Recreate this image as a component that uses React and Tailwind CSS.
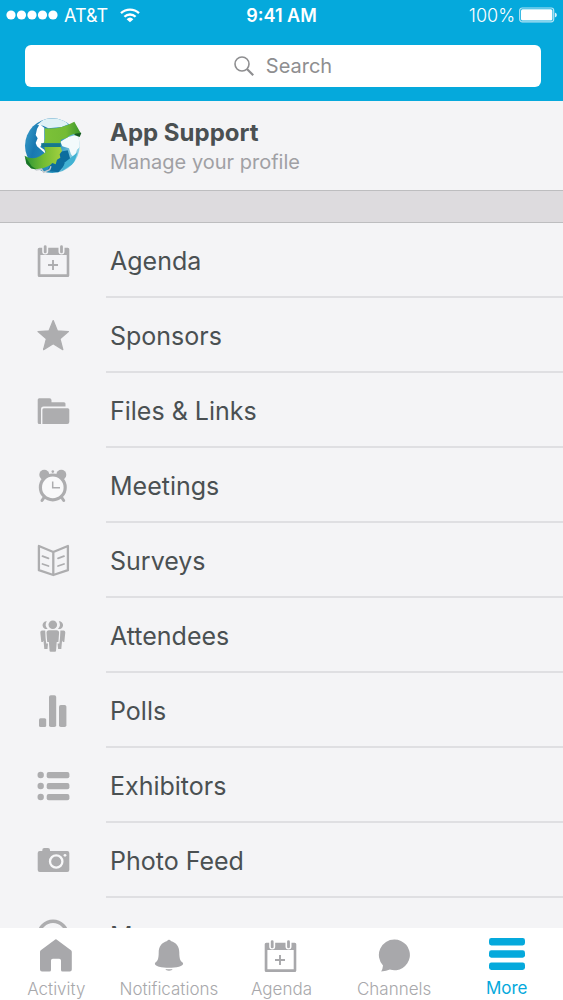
import React from "react";

const Icon = ({ children, className = "" }) => (
  <svg viewBox="0 0 36 36" aria-hidden="true" className={`size-9 shrink-0 ${className}`} fill="currentColor">
    {children}
  </svg>
);

const CalendarIcon = () => (
  <Icon>
    <path
      fillRule="evenodd"
      d="M3.2 4.8H6.2V8.5a3 3 0 0 0 6 0V4.8H22.5V8.5a3 3 0 0 0 6 0V4.8H31.8a1.5 1.5 0 0 1 1.5 1.5V32.5a1.5 1.5 0 0 1-1.5 1.500H3.200a1.500 1.500 0 0 1-1.500-1.500V6.300a1.500 1.500 0 0 1 1.500-1.500ZM4.400 12V31.300H30.700V12Z"
    />
    <rect x="7.800" y="2.300" width="2.800" height="8" rx="1.400" />
    <rect x="24.100" y="2.300" width="2.800" height="8" rx="1.400" />
    <path d="M17 17v10M12 22h10" fill="none" stroke="currentColor" strokeWidth="1.900" />
  </Icon>
);

const StarIcon = () => (
  <Icon>
    <path
      d="M17.200 2.600 21.300 12.800 32.400 13.600 24 20.800 26.800 31.600 17.200 25.800 7.600 31.600 10.400 20.800 2 13.600 13.100 12.800Z"
      stroke="currentColor"
      strokeWidth="1.300"
      strokeLinejoin="round"
    />
  </Icon>
);

const FolderIcon = () => (
  <Icon>
    <path d="M3.200 5.300H13.500a2 2 0 0 1 2 2V9.300H28a1.500 1.500 0 0 1 1.500 1.500V13.600H7.500a2.500 2.500 0 0 0-2.500 2.500V31H3.200a1.500 1.500 0 0 1-1.500-1.500V6.800a1.500 1.500 0 0 1 1.500-1.500Z" />
    <path d="M8 15.300H31.800a1.500 1.500 0 0 1 1.500 1.500V29a2 2 0 0 1-2 2H6.400V16.800a1.500 1.500 0 0 1 1.600-1.500Z" />
  </Icon>
);

const ClockIcon = () => (
  <Icon>
    <circle cx="8.300" cy="6.800" r="5" />
    <circle cx="25.300" cy="6.800" r="5" />
    <path d="M8 29.500 6 32.500M25.700 29.500l2 3" stroke="currentColor" strokeWidth="3" strokeLinecap="round" />
    <circle cx="16.800" cy="19.400" r="12.400" fill="#f9f9fa" stroke="currentColor" strokeWidth="3.200" />
    <circle cx="16.800" cy="3.600" r="1.300" />
    <path d="M16.700 13.500V19.700H24" fill="none" stroke="currentColor" strokeWidth="1.500" />
  </Icon>
);

const BookIcon = () => (
  <Icon>
    <g fill="none" stroke="currentColor" strokeLinejoin="round">
      <path d="M2.900 3 17.300 9 31.900 3V27.200L17.300 32 2.900 27.200ZM17.300 9V32" strokeWidth="2.300" />
      <path
        d="M6.500 13.200 12.500 15.300M6.500 21 12.500 23M22 15.300 28 13.200M22 23 28 21"
        strokeWidth="1.800"
        strokeLinecap="round"
      />
    </g>
  </Icon>
);

const PeopleIcon = () => (
  <Icon>
    <path d="M10.800 3.300a3.900 3.900 0 1 0 .8 7.600 6 6 0 0 1-.8-7.600ZM22.800 3.300a3.900 3.900 0 1 1-.8 7.600 6 6 0 0 0 .8-7.600Z" />
    <circle cx="16.800" cy="6.700" r="4.300" />
    <path d="M13 12.200H20.600a2.500 2.500 0 0 1 2.500 2.500L22.400 24H20.700L20 33a1 1 0 0 1-1 .8H14.600a1 1 0 0 1-1-.8L12.900 24H11.200L10.500 14.700a2.500 2.500 0 0 1 2.500-2.500Z" />
    <path d="M6.600 12.500H9.200L9.600 20 10.200 25.500H12L11.500 31H8.300L7.500 22.500 6.800 24H5.300L4.300 14.500a2 2 0 0 1 2.300-2ZM27 12.500H24.400L24 20 23.400 25.500H21.600L22.100 31H25.300L26.100 22.500 26.900 24H28.300L29.300 14.500a2 2 0 0 0-2.300-2Z" />
  </Icon>
);

const BarsIcon = () => (
  <Icon>
    <rect x="3" y="25.300" width="7.200" height="8.700" rx="1.500" />
    <rect x="13" y="2.300" width="7.200" height="31.700" rx="1.800" />
    <rect x="23" y="12" width="7.400" height="22" rx="1.800" />
  </Icon>
);

const ListIcon = () => (
  <Icon>
    <circle cx="4.700" cy="7" r="3.200" />
    <circle cx="4.700" cy="18" r="3.200" />
    <circle cx="4.700" cy="29" r="3.200" />
    <rect x="10.700" y="3.900" width="22.700" height="6.300" rx="2" />
    <rect x="10.700" y="14.900" width="22.700" height="6.300" rx="2" />
    <rect x="10.700" y="25.900" width="22.700" height="6.300" rx="2" />
  </Icon>
);

const CameraIcon = () => (
  <Icon>
    <path d="M3.700 8H6.300V7a2 2 0 0 1 2-2h3.700a2 2 0 0 1 2 2V8H31.300a2 2 0 0 1 2 2V27a2 2 0 0 1-2 2H3.700a2 2 0 0 1-2-2V10a2 2 0 0 1 2-2Z" />
    <circle cx="20.200" cy="18.500" r="6.200" fill="none" stroke="#f8f8f9" strokeWidth="2.300" />
    <circle cx="29" cy="12.300" r="1.400" fill="#f8f8f9" />
  </Icon>
);

const PinIcon = () => (
  <Icon>
    <circle cx="17" cy="17.500" r="14.200" fill="none" stroke="currentColor" strokeWidth="3.600" />
  </Icon>
);

const HomeIcon = () => (
  <Icon>
    <path d="M16.600 1.900a2 2 0 0 1 2.600 0L33 12.300a2 2 0 0 1 .8 1.600V31.500a2 2 0 0 1-2 2H24.500a1.500 1.500 0 0 1-1.500-1.500V22.500a1.800 1.800 0 0 0-1.800-1.800H14.800a1.800 1.800 0 0 0-1.800 1.800V32a1.500 1.500 0 0 1-1.500 1.500H4a2 2 0 0 1-2-2V13.900a2 2 0 0 1 .8-1.600Z" />
  </Icon>
);

const BellIcon = () => (
  <Icon>
    <path d="M16.200 3a1.900 1.900 0 0 1 3.600 0C25.500 4.500 28.300 9 28.300 14.500 28.300 21 29.500 23 31.600 24.600 32.800 26 31.800 27.800 28 28.700 22 30.200 14 30.200 8 28.700 4.200 27.800 3.200 26 4.400 24.600 6.500 23 7.700 21 7.700 14.500 7.700 9 10.500 4.500 16.200 3ZM14.300 30.900q3.700.5 7.400 0a3.800 2.300 0 0 1-7.400 0Z" />
  </Icon>
);

const ChatIcon = () => (
  <Icon>
    <path d="M18.500 1.500a15.400 15.400 0 1 1-4.600 30.100Q10.500 33 5.200 33.500 6.800 30.500 7 27.400A15.400 15.400 0 0 1 18.500 1.500Z" />
  </Icon>
);

const MenuIcon = () => (
  <Icon>
    <rect x="0" y="0" width="36" height="7.400" rx="2.400" />
    <rect x="0" y="12.300" width="36" height="7.400" rx="2.400" />
    <rect x="0" y="24.600" width="36" height="7.400" rx="2.400" />
  </Icon>
);

const Globe = () => (
  <svg viewBox="0 0 60 60" aria-hidden="true" className="size-[60px] shrink-0">
    <defs>
      <linearGradient id="sea" x1="0" y1="0" x2="1" y2="0.300">
        <stop offset="0" stopColor="#3fa3cf" />
        <stop offset="0.300" stopColor="#1878b0" />
        <stop offset="0.700" stopColor="#2a94c0" />
        <stop offset="1" stopColor="#8fd2e5" />
      </linearGradient>
      <linearGradient id="leaf" x1="0" y1="0" x2="1" y2="0">
        <stop offset="0" stopColor="#7cc238" />
        <stop offset="0.600" stopColor="#74bb35" />
        <stop offset="1" stopColor="#3b962c" />
      </linearGradient>
      <linearGradient id="stem" x1="0" y1="0" x2="1" y2="0">
        <stop offset="0" stopColor="#2c9436" />
        <stop offset="0.500" stopColor="#72bc33" />
        <stop offset="1" stopColor="#a3d03f" />
      </linearGradient>
      <clipPath id="ball">
        <circle cx="112" cy="110" r="82" />
      </clipPath>
    </defs>
    <g transform="translate(-7 -7) scale(0.3333)">
      <circle cx="112" cy="110" r="82" fill="url(#sea)" />
      <g clipPath="url(#ball)">
        <path d="M66 48 90 28 140 28 160 46 140 54 100 58 84 50Z" fill="#dff1f6" />
        <path d="M74 46 88 56 88 100 80 106 76 114 88 122 92 134 80 124 66 112 62 102 68 88 62 78 66 60Z" fill="#fff" />
        <path d="M136 98 160 84 190 76 198 110 186 122 178 146 168 136 162 118 142 112Z" fill="#f3fafc" />
        <path d="M136 128 158 124 166 150 130 190 96 186 110 160Z" fill="#0d6d9e" />
        <path d="M150 160 188 130 176 164 140 186Z" fill="#42b2d3" />
      </g>
      <path d="M182 66 199 72 194 84 178 78Z" fill="#145b20" />
      <path d="M89 58Q136 62 178 38L197 72Q168 74 156 86L138 92 136 103H87L90 88Z" fill="url(#leaf)" />
      <path d="M78 103H137V114H82Z" fill="#17788a" />
      <path d="M88 114H137L141 126 134 136 136 146 126 152 122 166 112 162 106 168Q76 186 48 178L29 140Q52 154 74 142L92 130Z" fill="url(#stem)" />
      <path d="M29 140 34 164 48 178 66 182 50 172Z" fill="#187427" />
      <path d="M62 183 80 180 86 190 104 182 108 172" fill="none" stroke="#c3c9cd" strokeWidth="4" />
    </g>
  </svg>
);

const items = [
  ["Agenda", CalendarIcon],
  ["Sponsors", StarIcon],
  ["Files & Links", FolderIcon],
  ["Meetings", ClockIcon],
  ["Surveys", BookIcon],
  ["Attendees", PeopleIcon],
  ["Polls", BarsIcon],
  ["Exhibitors", ListIcon],
  ["Photo Feed", CameraIcon],
  ["Maps", PinIcon],
];

const tabs = [
  ["Activity", HomeIcon],
  ["Notifications", BellIcon],
  ["Agenda", CalendarIcon],
  ["Channels", ChatIcon],
  ["More", MenuIcon],
];

function StatusBar() {
  return (
    <div className="grid h-[30px] grid-cols-3 items-center px-1.5 text-[18px] text-white">
      <div className="flex items-center gap-1.5">
        <svg viewBox="0 0 52 10" aria-hidden="true" className="h-2.5 w-[52px]" fill="currentColor">
          <circle cx="5" cy="5" r="4.600" />
          <circle cx="15.500" cy="5" r="4.600" />
          <circle cx="26" cy="5" r="4.600" />
          <circle cx="36.500" cy="5" r="4.600" />
          <circle cx="47" cy="5" r="4.600" />
        </svg>
        <span>AT&amp;T</span>
        <svg viewBox="0 0 20 15" aria-hidden="true" className="ml-1.5 h-[15px] w-5" fill="none" stroke="currentColor" strokeWidth="2.300">
          <path d="M1 5.200a13 13 0 0 1 18 0M4.400 8.800a8 8 0 0 1 11.200 0" />
          <path d="M10 14.300 6.600 11.200a5 5 0 0 1 6.800 0Z" fill="currentColor" stroke="none" />
        </svg>
      </div>
      <div className="text-center font-semibold">9:41 AM</div>
      <div className="flex items-center justify-end gap-1">
        <span className="font-light">100%</span>
        <svg viewBox="0 0 38 16" aria-hidden="true" className="h-4 w-[38px]">
          <rect x="0.700" y="1" width="34" height="13.800" rx="2.500" fill="none" stroke="#b5e4f4" strokeWidth="1.200" />
          <rect x="2" y="2.300" width="31.400" height="11.200" rx="1.500" fill="#fff" />
          <path d="M35.900 5.500q2 .6 2 2.500t-2 2.500Z" fill="#d9f2fa" />
        </svg>
      </div>
    </div>
  );
}

export default function App() {
  return (
    <div className="flex h-screen flex-col bg-[#f4f4f6] font-['Inter','Liberation_Sans',sans-serif] text-[#4a5052]">
      <header className="shrink-0 bg-[#05a9dc] pb-[14px]">
        <StatusBar />
        <div className="mt-[15px] pr-[22px] pl-[25px]">
          <label className="flex h-[42px] items-center justify-center gap-3 rounded-md bg-white text-[#8e8e90]">
            <svg viewBox="0 0 20 20" aria-hidden="true" className="size-5" fill="none" stroke="currentColor" strokeWidth="1.600">
              <circle cx="8" cy="8" r="7" />
              <path d="M13 13 19.200 19.200" strokeWidth="2.200" />
            </svg>
            <input
              type="search"
              aria-label="Search"
              placeholder="Search"
              className="[field-sizing:content] bg-transparent text-[20px] outline-none placeholder:text-[#8e8e90]"
            />
          </label>
        </div>
      </header>

      <main className="min-h-0 flex-1 overflow-y-auto [scrollbar-width:none]">
        <a href="#profile" className="flex h-[89px] items-center gap-7 pl-[22px]">
          <Globe />
          <span className="flex flex-col pt-0.5">
            <span className="text-[24px] leading-[30px] font-bold">App Support</span>
            <span className="text-[20px] leading-7 text-[#a0a0a4]">Manage your profile</span>
          </span>
        </a>
        <div className="h-[33px] border-y border-[#bdbdbf] bg-[#dddbde]" />
        <nav aria-label="Sections">
          <ul>
            {items.map(([label, Glyph]) => (
              <li key={label}>
                <a href="#section" className="flex h-[75px] items-center pl-9">
                  <span className="text-[#adadaf]">
                    <Glyph />
                  </span>
                  <span className="ml-[34px] flex h-full flex-1 items-center border-b-2 border-[#dfdfe2] pt-1 pl-1 text-[25px]">
                    {label}
                  </span>
                </a>
              </li>
            ))}
          </ul>
        </nav>
      </main>

      <nav aria-label="Tabs" className="grid h-[72px] shrink-0 grid-cols-5 bg-white">
        {tabs.map(([label, Glyph]) => {
          const active = label === "More";
          return (
            <a
              key={label}
              href="#tab"
              aria-current={active ? "page" : undefined}
              className={`flex flex-col items-center pt-2.5 ${active ? "text-[#05a9dc]" : "text-[#a8a8ab]"}`}
            >
              <Glyph />
              <span className={active ? "text-[17px] leading-7" : "pt-1 text-[17px] leading-[22px] font-light"}>{label}</span>
            </a>
          );
        })}
      </nav>
    </div>
  );
}
